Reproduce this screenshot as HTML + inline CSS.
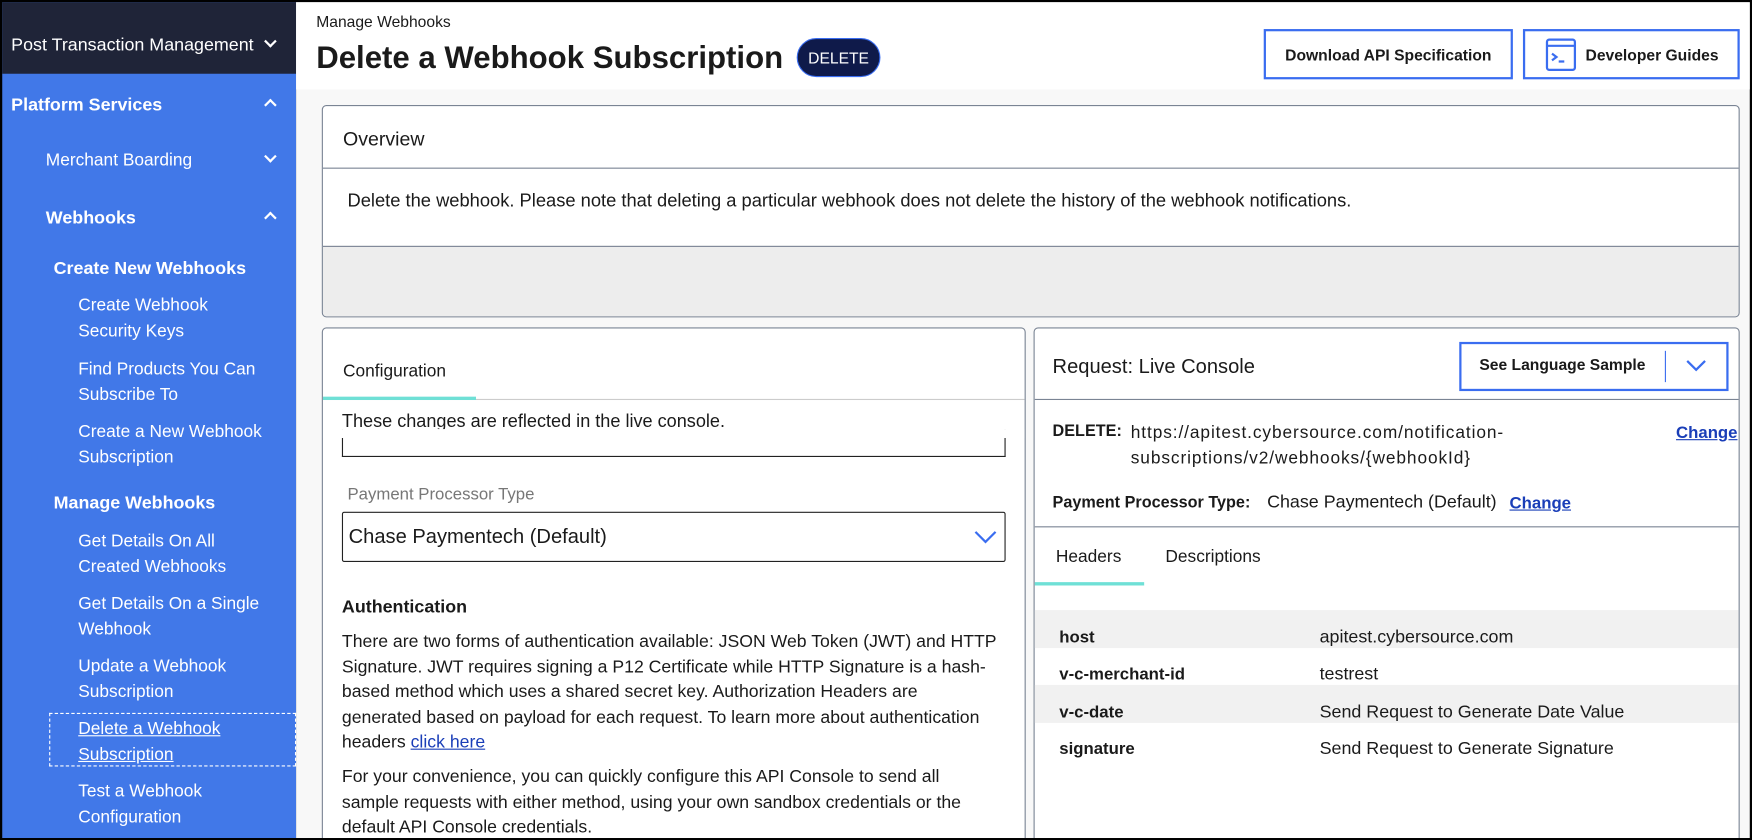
<!DOCTYPE html>
<html><head><meta charset="utf-8"><style>
*{box-sizing:border-box;margin:0;padding:0}
html,body{width:1752px;height:840px;overflow:hidden;background:#000}
#w{position:absolute;left:0;top:0;width:1568px;height:752px;transform:scale(1.11735);transform-origin:0 0;font-family:"Liberation Sans",sans-serif;color:#1a1a1a;background:#000;overflow:hidden}
.a{position:absolute;white-space:nowrap}
#sb{position:absolute;left:2px;top:2px;width:263px;height:750px;background:#4178e8}
#sbt{position:absolute;left:2px;top:2px;width:263px;height:64px;background:#1f2438}
.s{position:absolute;color:#fff;font-size:15px;line-height:22.5px;white-space:nowrap}
.b{font-weight:bold;font-size:16px}
.chev{position:absolute;width:8px;height:8px;border-right:2px solid #fff;border-bottom:2px solid #fff}
.dn{transform:rotate(45deg)}.up{transform:rotate(-135deg)}
#main{position:absolute;left:265px;top:2px;width:1301px;height:750px;background:#f8f8f8}
#hd{position:absolute;left:265px;top:2px;width:1301px;height:78px;background:#fff}
.card{position:absolute;background:#fff;border:1px solid #7a8494;border-radius:4px}
.btn{position:absolute;border:2px solid #3a6df0;background:#fff;font-size:14px;font-weight:bold;display:flex;align-items:center;justify-content:center}
.t{font-size:15.8px;line-height:22.5px;white-space:nowrap}
</style></head><body><div id="w">
<div id="sb"></div><div id="sbt"></div>
<div class="s" style="left:10px;top:30px;font-size:16px">Post Transaction Management</div><div class="chev dn" style="left:238px;top:33px"></div>
<div class="s b" style="left:10px;top:84px">Platform Services</div><div class="chev up" style="left:238px;top:90px"></div>
<div class="s" style="left:41px;top:133px;font-size:15.5px">Merchant Boarding</div><div class="chev dn" style="left:238px;top:136px"></div>
<div class="s b" style="left:41px;top:185px">Webhooks</div><div class="chev up" style="left:238px;top:191px"></div>
<div class="s b" style="left:48px;top:230px">Create New Webhooks</div>
<div class="s" style="left:70px;top:263px;font-size:15.5px">Create Webhook<br>Security Keys</div>
<div class="s" style="left:70px;top:320px;font-size:15.5px">Find Products You Can<br>Subscribe To</div>
<div class="s" style="left:70px;top:376px;font-size:15.5px">Create a New Webhook<br>Subscription</div>
<div class="s b" style="left:48px;top:440px">Manage Webhooks</div>
<div class="s" style="left:70px;top:474px;font-size:15.5px">Get Details On All<br>Created Webhooks</div>
<div class="s" style="left:70px;top:530px;font-size:15.5px">Get Details On a Single<br>Webhook</div>
<div class="s" style="left:70px;top:586px;font-size:15.5px">Update a Webhook<br>Subscription</div>
<div style="position:absolute;left:44px;top:638px;width:221px;height:48px;border:1px dashed #fff"></div>
<div class="s" style="left:70px;top:642px;font-size:15.5px;text-decoration:underline">Delete a Webhook<br>Subscription</div>
<div class="s" style="left:70px;top:698px;font-size:15.5px">Test a Webhook<br>Configuration</div>

<div id="main"></div><div id="hd"></div>
<div class="a" style="left:283px;top:11px;font-size:14px">Manage Webhooks</div>
<div class="a" style="left:283px;top:36px;font-size:27.9px;font-weight:bold">Delete a Webhook Subscription</div>
<div class="a" style="left:713px;top:34px;width:75px;height:35px;border-radius:18px;background:#0f1a4a;border:1.5px solid #3a6df0;color:#fff;font-size:14px;display:flex;align-items:center;justify-content:center">DELETE</div>
<div class="btn" style="left:1131px;top:26px;width:223px;height:45px">Download API Specification</div>
<div class="btn" style="left:1363px;top:26px;width:194px;height:45px;justify-content:flex-start;padding-left:18px">
<svg width="28" height="30" viewBox="0 0 28 30" style="margin-right:8px"><rect x="1.5" y="1.5" width="25" height="27" rx="2" fill="none" stroke="#3a6df0" stroke-width="2"/><line x1="1.5" y1="7" x2="26.5" y2="7" stroke="#3a6df0" stroke-width="2"/><path d="M6 14l4 3-4 3M12 21h5" fill="none" stroke="#3a6df0" stroke-width="2"/></svg>Developer Guides</div>

<div class="card" style="left:288px;top:94px;width:1269px;height:190px;overflow:hidden">
<div style="position:absolute;left:0;top:55px;width:100%;border-top:1px solid #7a8494"></div>
<div class="a" style="left:18px;top:19px;font-size:17.5px">Overview</div>
<div class="a" style="left:22px;top:76px;font-size:16.4px">Delete the webhook. Please note that deleting a particular webhook does not delete the history of the webhook notifications.</div>
<div style="position:absolute;left:0;top:125px;width:100%;height:65px;background:#ededed;border-top:1px solid #7a8494"></div>
</div>

<div class="card" style="left:288px;top:293px;width:630px;height:470px;overflow:hidden">
<div class="a" style="left:18px;top:30px;font-size:15.5px">Configuration</div>
<div style="position:absolute;left:0;top:63px;width:100%;border-top:1px solid #ccc"></div>
<div style="position:absolute;left:0;top:61px;width:137px;height:3px;background:#6fe0d6"></div>
<div class="a" style="left:17px;top:74px;font-size:16.2px">These changes are reflected in the live console.</div>
<div style="position:absolute;left:17px;top:90px;width:594px;height:25px;border:1px solid #222;border-top:none"></div>
<div style="position:absolute;left:0;top:90px;width:100%;height:8px;background:#fff"></div>
<div class="a" style="left:22px;top:140px;font-size:15px;color:#777">Payment Processor Type</div>
<div style="position:absolute;left:17px;top:164px;width:594px;height:45px;border:1px solid #222;border-radius:2px"></div>
<div class="a" style="left:23px;top:176px;font-size:18px">Chase Paymentech (Default)</div>
<svg style="position:absolute;left:583px;top:181px" width="20" height="12"><path d="M1 1l9 9 9-9" fill="none" stroke="#3a6df0" stroke-width="2"/></svg>
<div class="a" style="left:17px;top:241px;font-size:16px;font-weight:bold">Authentication</div>
<div class="t" style="position:absolute;left:17px;top:270px">There are two forms of authentication available: JSON Web Token (JWT) and HTTP<br>Signature. JWT requires signing a P12 Certificate while HTTP Signature is a hash-<br>based method which uses a shared secret key. Authorization Headers are<br>generated based on payload for each request. To learn more about authentication<br>headers <span style="color:#1a3eb8;text-decoration:underline">click here</span></div>
<div class="t" style="position:absolute;left:17px;top:391px">For your convenience, you can quickly configure this API Console to send all<br>sample requests with either method, using your own sandbox credentials or the<br>default API Console credentials.</div>
</div>

<div class="card" style="left:925px;top:293px;width:632px;height:470px;overflow:hidden">
<div class="a" style="left:16px;top:24px;font-size:18px">Request: Live Console</div>
<div style="position:absolute;left:380px;top:12px;width:241px;height:44px;border:2px solid #3a6df0"></div>
<div class="a" style="left:398px;top:24px;font-size:14px;font-weight:bold">See Language Sample</div>
<div style="position:absolute;left:564px;top:20px;height:28px;border-left:1px solid #3a6df0"></div>
<svg style="position:absolute;left:583px;top:28px" width="18" height="11"><path d="M1 1l8 8 8-8" fill="none" stroke="#3a6df0" stroke-width="2"/></svg>
<div style="position:absolute;left:0;top:63px;width:100%;border-top:1px solid #7a8494"></div>
<div class="a" style="left:16px;top:84px;font-size:14.5px;font-weight:bold">DELETE:</div>
<div style="position:absolute;left:86px;top:82px;width:440px;font-size:15.5px;line-height:23px;letter-spacing:0.8px;white-space:nowrap">https://apitest.cybersource.com/notification-<br>subscriptions/v2/webhooks/{webhookId}</div>
<div class="a" style="left:574px;top:85px;font-size:15px;font-weight:bold;color:#1a3eb8;text-decoration:underline">Change</div>
<div class="a" style="left:16px;top:148px;font-size:14.5px;font-weight:bold">Payment Processor Type:</div>
<div class="a" style="left:208px;top:147px;font-size:16px">Chase Paymentech (Default)</div>
<div class="a" style="left:425px;top:148px;font-size:15px;font-weight:bold;color:#1a3eb8;text-decoration:underline">Change</div>
<div style="position:absolute;left:0;top:177px;width:100%;border-top:1px solid #7a8494"></div>
<div class="a" style="left:19px;top:196px;font-size:15.5px">Headers</div>
<div class="a" style="left:117px;top:196px;font-size:15.5px">Descriptions</div>
<div style="position:absolute;left:0;top:227px;width:98px;height:3px;background:#6fe0d6"></div>
<div style="position:absolute;left:0;top:252px;width:100%;height:34px;background:#f1f1f1"></div>
<div style="position:absolute;left:0;top:319px;width:100%;height:34px;background:#f1f1f1"></div>
<div class="a" style="left:22px;top:268px;font-size:15px;font-weight:bold">host</div><div class="a" style="left:255px;top:268px;font-size:16px">apitest.cybersource.com</div>
<div class="a" style="left:22px;top:301px;font-size:15px;font-weight:bold">v-c-merchant-id</div><div class="a" style="left:255px;top:301px;font-size:16px">testrest</div>
<div class="a" style="left:22px;top:335px;font-size:15px;font-weight:bold">v-c-date</div><div class="a" style="left:255px;top:335px;font-size:16px">Send Request to Generate Date Value</div>
<div class="a" style="left:22px;top:368px;font-size:15px;font-weight:bold">signature</div><div class="a" style="left:255px;top:368px;font-size:16px">Send Request to Generate Signature</div>
</div>
<div style="position:absolute;left:0;top:750px;width:1568px;height:2px;background:#000"></div>
</div></body></html>
